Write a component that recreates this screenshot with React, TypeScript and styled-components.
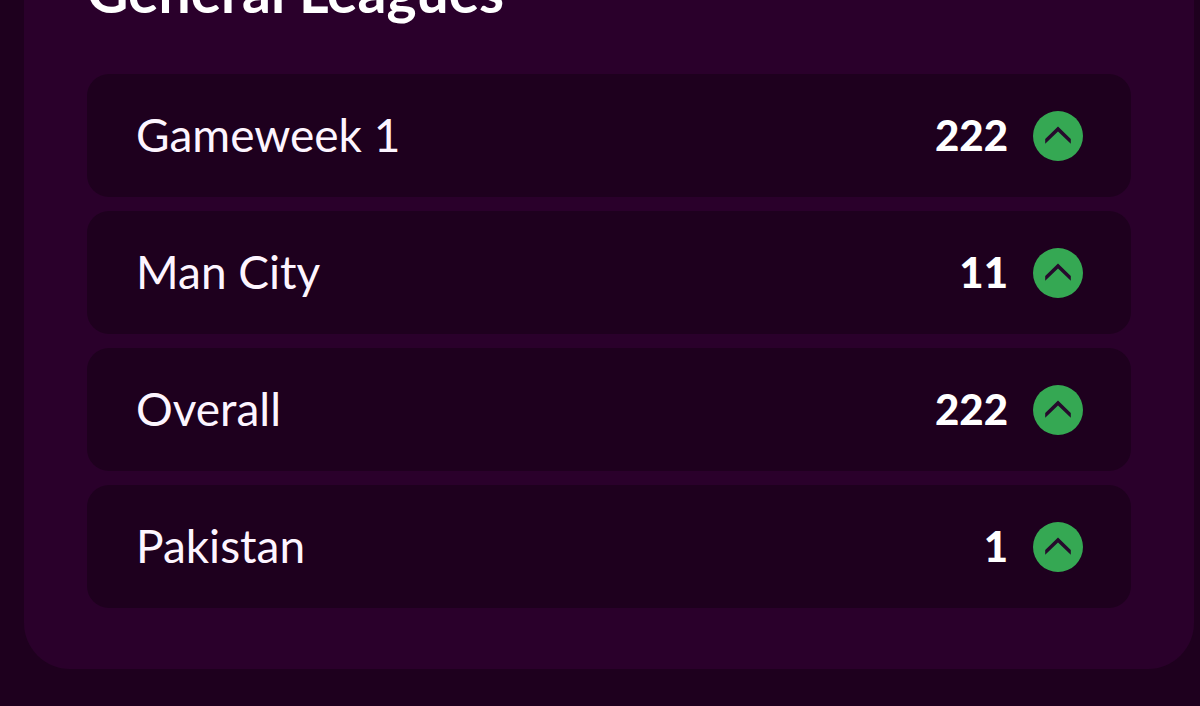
import React from "react";
import styled, { createGlobalStyle } from "styled-components";

const GlobalStyle = createGlobalStyle`
  *, *::before, *::after { box-sizing: border-box; }
  body {
    margin: 0;
    background: #1e001e;
    color: #fdf5ff;
    font-family: Lato, "Open Sans", sans-serif;
  }
`;

const Page = styled.main`
  min-height: 100vh;
  padding: 0 6px 36px 24px;
  overflow: hidden;
`;

const Card = styled.section`
  padding: 0 63px 61px;
  border-radius: 0 0 46px 46px;
  background: #2a002b;
`;

const Title = styled.h2`
  margin: -45px 0 0;
  padding-bottom: 47px;
  font-size: 57px;
  font-weight: 700;
  line-height: 72px;
  white-space: nowrap;
  color: #ffffff;
`;

const LeagueList = styled.ul`
  display: flex;
  flex-direction: column;
  gap: 14px;
  margin: 0;
  padding: 0;
  list-style: none;
`;

const LeagueRow = styled.li`
  display: flex;
  align-items: center;
  gap: 25px;
  min-height: 123px;
  padding: 0 48px 0 49px;
  border-radius: 22px;
  background: #1e001e;
`;

const LeagueName = styled.span`
  flex: 1;
  padding-bottom: 2px;
  font-size: 46px;
  line-height: 56px;
`;

const Rank = styled.strong`
  padding-bottom: 2px;
  font-size: 42px;
  font-weight: 900;
  line-height: 56px;
  color: #ffffff;
`;

const Badge = styled.svg`
  flex: none;
  width: 50px;
  height: 50px;
`;

const RankUp = () => (
  <Badge viewBox="0 0 50 50" role="img" aria-label="Rank up">
    <circle cx="25" cy="25" r="25" fill="#35a853" />
    <path d="M25 15.4 37.8 28V32.8L25 20.4 12.2 32.8V28Z" fill="#260a2c" />
  </Badge>
);

const leagues = [
  { name: "Gameweek 1", rank: 222 },
  { name: "Man City", rank: 11 },
  { name: "Overall", rank: 222 },
  { name: "Pakistan", rank: 1 },
];

export default function App() {
  return (
    <>
      <GlobalStyle />
      <Page>
        <Card>
          <Title>General Leagues</Title>
          <LeagueList>
            {leagues.map(({ name, rank }) => (
              <LeagueRow key={name}>
                <LeagueName>{name}</LeagueName>
                <Rank>{rank}</Rank>
                <RankUp />
              </LeagueRow>
            ))}
          </LeagueList>
        </Card>
      </Page>
    </>
  );
}
